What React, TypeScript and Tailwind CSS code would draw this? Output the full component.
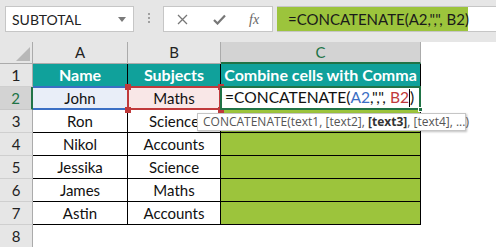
import React from 'react';

// ─── Data ───

const dataRows: [string, string][] = [
  ['Ron', 'Science'],
  ['Nikol', 'Accounts'],
  ['Jessika', 'Science'],
  ['James', 'Maths'],
  ['Astin', 'Accounts'],
];

const font = { fontFamily: 'Lato, "Open Sans", sans-serif' };

// ─── Top bar ───

function NameBox() {
  return (
    <div className="ml-[5px] w-[129px] h-[26px] bg-white border border-[#c6c6c6] flex items-center justify-between pl-[6px] pr-[7px] text-[14px] text-[#222]">
      <span>SUBTOTAL</span>
      <span className="w-0 h-0 border-l-[4px] border-r-[4px] border-t-[5px] border-l-transparent border-r-transparent border-t-[#7a7a7a]" />
    </div>
  );
}

function FormulaButtons() {
  return (
    <div className="ml-[13px] w-[110px] h-[26px] bg-white border border-[#c6c6c6] flex items-center text-[#6f6f6f]">
      <svg className="ml-[13px]" width="11" height="11" viewBox="0 0 11 11">
        <path d="M1 1 L10 10 M10 1 L1 10" stroke="#777" strokeWidth="1.3" />
      </svg>
      <svg className="ml-[25px]" width="13" height="11" viewBox="0 0 13 11">
        <path d="M1 6 L4.5 9.5 L12 1.5" stroke="#777" strokeWidth="2.2" fill="none" />
      </svg>
      <span className="ml-[23px] text-[14px] italic text-[#666]" style={{ fontFamily: '"Liberation Serif", serif' }}>fx</span>
    </div>
  );
}

function TopBar() {
  return (
    <div className="h-[42px] bg-[#e6e6e6] flex items-start pt-[6px]">
      <NameBox />
      <div className="ml-[14px] mt-[7px] flex flex-col gap-[2px]">
        <span className="w-[2px] h-[2px] bg-[#a0a0a0]" />
        <span className="w-[2px] h-[2px] bg-[#a0a0a0]" />
        <span className="w-[2px] h-[2px] bg-[#a0a0a0]" />
      </div>
      <FormulaButtons />
      <div className="ml-[4px] flex-1 h-[26px] bg-white border-y border-[#c6c6c6] flex">
        <div className="w-[191px] bg-[#9cc43c] flex items-center pl-[11px] text-[15px] text-[#1a1a1a] whitespace-pre">
          {'=CONCATENATE(A2,",", B2)'}
        </div>
      </div>
    </div>
  );
}

// ─── Grid ───

function ColumnHeaders() {
  return (
    <div className="flex h-[22px] text-[15px] text-[#222]">
      <div className="relative w-[33px] bg-[#e6e6e6] border-r border-b border-[#ababab]">
        <svg className="absolute right-[2px] bottom-[2px]" width="14" height="14" viewBox="0 0 14 14">
          <path d="M14 0 L14 14 L0 14 Z" fill="#b8b8b8" />
        </svg>
      </div>
      <div className="w-[95px] bg-[#e6e6e6] border-r border-b border-[#ababab] flex items-center justify-center">A</div>
      <div className="w-[93px] bg-[#e6e6e6] border-r border-b border-[#ababab] flex items-center justify-center">B</div>
      <div className="w-[200px] bg-[#d3d3d3] border-r border-[#ababab] border-b-2 border-b-[#217346] flex items-center justify-center text-[#217346]">C</div>
      <div className="flex-1 bg-white" />
    </div>
  );
}

function RowHeader({ n, active }: { n: number; active?: boolean }) {
  return (
    <div
      className={
        active
          ? 'w-[33px] bg-[#d3d3d3] border-r-2 border-r-[#217346] border-b border-b-[#c8c8c8] flex items-center justify-center text-[#217346]'
          : 'w-[33px] bg-[#e6e6e6] border-r border-b border-r-[#ababab] border-b-[#cfcfcf] flex items-center justify-center text-[#222]'
      }
    >
      {n}
    </div>
  );
}

function HeaderRow() {
  return (
    <div className="flex h-[23px] text-[16px]">
      <RowHeader n={1} />
      <div className="w-[95px] bg-[#10a19b] border-r border-b border-black flex items-center justify-center font-bold text-white">Name</div>
      <div className="w-[93px] bg-[#10a19b] border-r border-b border-black flex items-center justify-center font-bold text-white">Subjects</div>
      <div className="w-[200px] bg-[#10a19b] border-r border-b border-black flex items-center justify-center font-bold text-white whitespace-nowrap">Combine cells with Comma</div>
    </div>
  );
}

function Corner({ className }: { className: string }) {
  return <span className={`absolute w-[6px] h-[6px] bg-[#c0393b] ${className}`} />;
}

function ActiveRow() {
  return (
    <div className="flex h-[23px] text-[15px] text-[#111]">
      <RowHeader n={2} active />
      <div className="relative w-[95px] bg-[#e9eef8] border-r border-b border-black flex items-center justify-center">
        <span className="absolute inset-x-0 -top-[1px] -bottom-[1px] border-y-2 border-[#3b6fc4]" />
        John
      </div>
      <div className="relative w-[93px] bg-[#f9e7e7] border-r border-b border-black flex items-center justify-center">
        <span className="absolute -left-[1px] -right-[1px] -top-[1px] -bottom-[1px] border-2 border-[#c0393b]" />
        <Corner className="-left-[3px] -top-[3px]" />
        <Corner className="-right-[4px] -top-[3px]" />
        <Corner className="-left-[3px] -bottom-[4px]" />
        <Corner className="-right-[4px] -bottom-[4px]" />
        Maths
      </div>
      <div className="relative w-[200px] bg-white border-r border-b border-black flex items-center pl-[4px] text-[15.6px] whitespace-pre">
        <span className="absolute -left-[1px] -right-[1px] -top-[1px] -bottom-[1px] border-2 border-[#217346]" />
        <span className="absolute -right-[3px] -bottom-[3px] w-[5px] h-[5px] bg-[#217346] border border-white" />
        <span>=CONCATENATE(</span>
        <span className="text-[#3b6fc4]">A2</span>
        <span>{',",", '}</span>
        <span className="text-[#c0393b]">B2</span>
        <span className="w-[1px] h-[18px] bg-black" />
        <span>)</span>
      </div>
    </div>
  );
}

function DataRow({ n, name, subject }: { n: number; name: string; subject: string }) {
  return (
    <div className="flex h-[23px] text-[15px] text-[#111]">
      <RowHeader n={n} />
      <div className="w-[95px] bg-white border-r border-b border-black flex items-center justify-center">{name}</div>
      <div className="w-[93px] bg-white border-r border-b border-black flex items-center justify-center">{subject}</div>
      <div className="w-[200px] bg-[#9cc43c] border-r border-b border-black" />
    </div>
  );
}

function Tooltip() {
  return (
    <div
      className="absolute left-[197px] top-[113px] w-[269px] h-[18px] bg-white border border-[#c6c6c6] shadow-[1px_1px_2px_rgba(0,0,0,0.25)] flex items-center pl-[5px] text-[12px] text-[#555] whitespace-pre"
      style={{ fontFamily: '"Open Sans", sans-serif' }}
    >
      CONCATENATE(text1, [text2], <b className="text-[#333]">[text3]</b>, [text4], ...)
    </div>
  );
}

export default function App() {
  return (
    <div className="relative w-[496px] h-[247px] bg-white overflow-hidden" style={font}>
      <TopBar />
      <ColumnHeaders />
      <HeaderRow />
      <ActiveRow />
      {dataRows.map(([name, subject], i) => (
        <DataRow key={name + i} n={i + 3} name={name} subject={subject} />
      ))}
      <div className="flex h-[23px] text-[15px]">
        <RowHeader n={8} />
      </div>
      <Tooltip />
    </div>
  );
}
